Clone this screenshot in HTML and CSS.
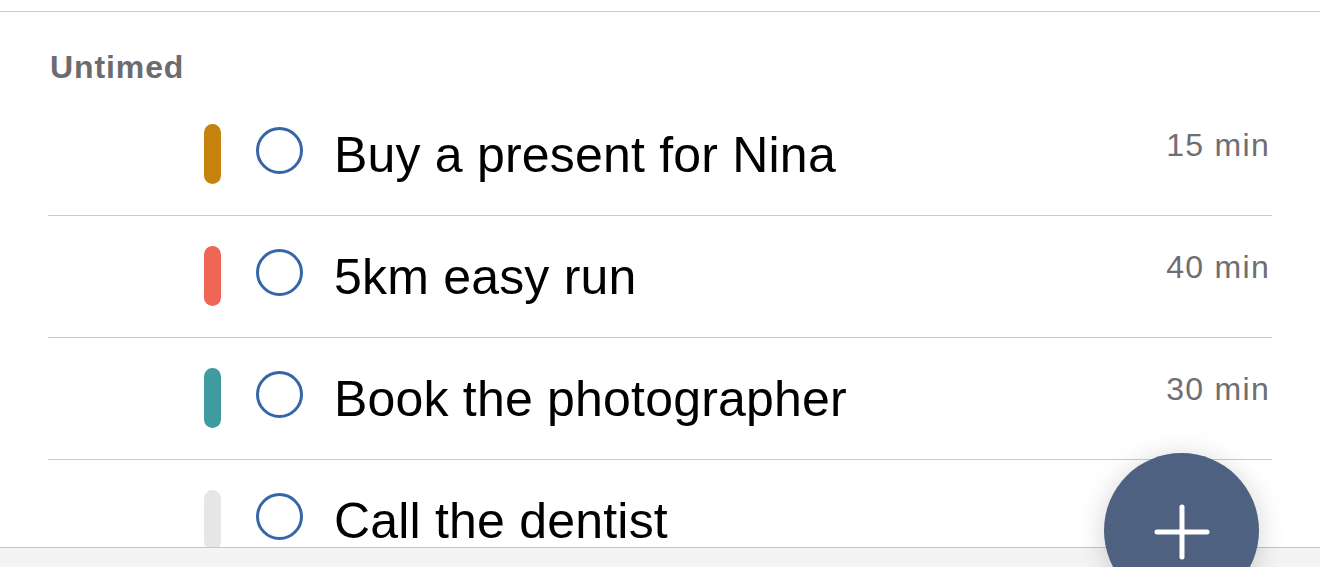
FILE: index.html
```html
<!DOCTYPE html>
<html lang="en">
<head>
    <meta charset="UTF-8">
    <meta name="viewport" content="width=device-width, initial-scale=1.0">
    <title>Today</title>
    <link rel="stylesheet" href="styles.css">
</head>
<body>
    <div class="top-rule"></div>

    <section class="section">
        <h2 class="section-title">Untimed</h2>
        <ul class="task-list">
            <li class="task">
                <span class="task-tag tag-gold"></span>
                <span class="task-check"></span>
                <span class="task-name">Buy a present for Nina</span>
                <span class="task-time">15 min</span>
            </li>
            <li class="task">
                <span class="task-tag tag-coral"></span>
                <span class="task-check"></span>
                <span class="task-name">5km easy run</span>
                <span class="task-time">40 min</span>
            </li>
            <li class="task">
                <span class="task-tag tag-teal"></span>
                <span class="task-check"></span>
                <span class="task-name">Book the photographer</span>
                <span class="task-time">30 min</span>
            </li>
            <li class="task">
                <span class="task-tag tag-none"></span>
                <span class="task-check"></span>
                <span class="task-name">Call the dentist</span>
            </li>
        </ul>
    </section>

    <!-- tab bar bottom -->
    <div class="tab-bar"></div>

    <button class="fab" aria-label="Add task">
        <svg width="56" height="56" viewBox="0 0 56 56">
            <path d="M28 3 V53 M3 28 H53" stroke="#fff" stroke-width="5" stroke-linecap="round" fill="none"/>
        </svg>
    </button>
</body>
</html>
```

FILE: styles.css
```css
body {
    font-family: "Liberation Sans", Arial, sans-serif;
    margin: 0;
    background: #fff;
    color: #000;
    height: 567px;
    overflow: hidden;
}
.top-rule {
    height: 11px;
    border-bottom: 1px solid #cbcbcd;
}
.section {
    padding: 0 48px;
}
.section-title {
    margin: 0;
    padding: 37px 0 0 2px;
    height: 45px;
    font-size: 32px;
    font-weight: bold;
    color: #6c6c70;
    letter-spacing: 0.9px;
}
.task-list {
    list-style: none;
    margin: 0;
    padding: 0;
}
.task {
    display: flex;
    align-items: center;
    height: 121px;
    padding-left: 156px;
    border-bottom: 1px solid #cbcbcd;
}
.task-tag {
    width: 17px;
    height: 60px;
    border-radius: 9px;
    margin-top: -2px;
    flex-shrink: 0;
}
.tag-gold { background: #c5820e; }
.tag-coral { background: #ef6656; }
.tag-teal { background: #3f9b9f; }
.tag-none { background: #e6e6e6; }
.task-check {
    width: 41px;
    height: 41px;
    border: 3px solid #3466a8;
    border-radius: 50%;
    margin-left: 35px;
    margin-top: -8px;
    flex-shrink: 0;
}
.task-name {
    margin-left: 31px;
    font-size: 50px;
    letter-spacing: 0.2px;
    flex: 1;
    margin-top: 0;
}
.task-time {
    align-self: flex-start;
    margin-top: 33px;
    margin-right: 2px;
    font-size: 32px;
    letter-spacing: 1.3px;
    color: #6e6e73;
}
.tab-bar {
    position: fixed;
    left: 0;
    right: 0;
    top: 547px;
    height: 20px;
    background: #f4f4f4;
    border-top: 1px solid #c6c6c8;
}
.fab {
    position: fixed;
    left: 1104px;
    top: 453px;
    width: 155px;
    height: 155px;
    border: none;
    border-radius: 50%;
    background: #4e6180;
    box-shadow: 0 4px 28px rgba(0, 0, 0, 0.18);
    display: flex;
    justify-content: center;
    align-items: flex-start;
    padding: 51px 0 0 0;
    cursor: pointer;
}
```
